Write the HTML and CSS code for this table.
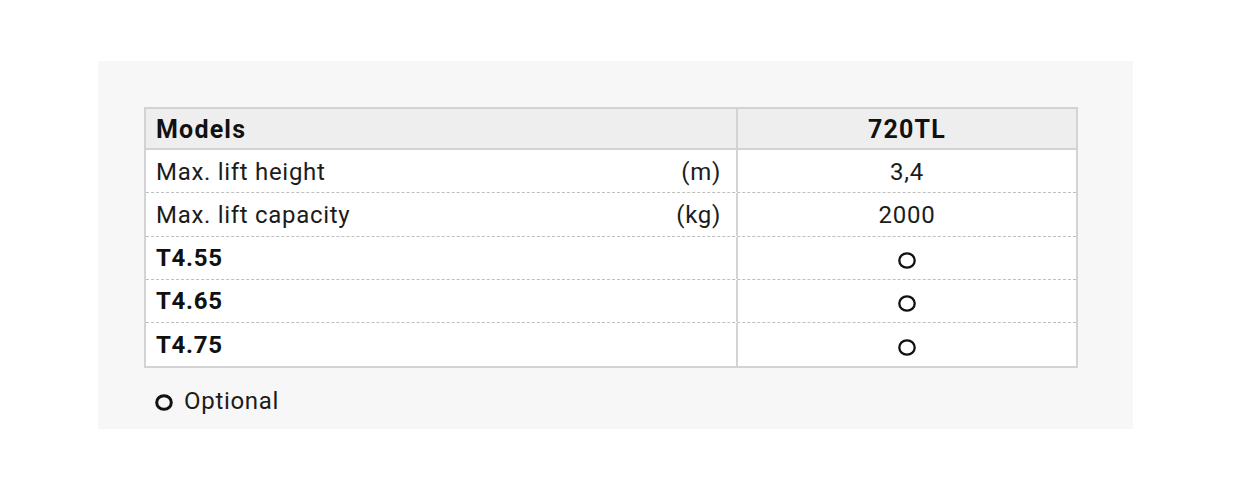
FILE: index.html
```html
<html>
<head>
<title>720TL Specifications</title>
<link rel="stylesheet" href="styles.css">
</head>
<body>
<div class="panel">
    <div class="specs">
        <div class="row head">
            <div class="label">Models</div>
            <div class="value">720TL</div>
        </div>
        <div class="row">
            <div class="label"><span>Max. lift height</span><span>(m)</span></div>
            <div class="value">3,4</div>
        </div>
        <div class="row">
            <div class="label"><span>Max. lift capacity</span><span>(kg)</span></div>
            <div class="value">2000</div>
        </div>
        <div class="row bold">
            <div class="label">T4.55</div>
            <div class="value"><svg class="opt" width="18" height="17" viewBox="0 0 18 17"><ellipse cx="9" cy="8.5" rx="7.7" ry="7.2" fill="none" stroke="#111" stroke-width="2.3"/></svg></div>
        </div>
        <div class="row bold">
            <div class="label">T4.65</div>
            <div class="value"><svg class="opt" width="18" height="17" viewBox="0 0 18 17"><ellipse cx="9" cy="8.5" rx="7.7" ry="7.2" fill="none" stroke="#111" stroke-width="2.3"/></svg></div>
        </div>
        <div class="row bold last">
            <div class="label">T4.75</div>
            <div class="value"><svg class="opt" width="18" height="17" viewBox="0 0 18 17"><ellipse cx="9" cy="8.5" rx="7.7" ry="7.2" fill="none" stroke="#111" stroke-width="2.3"/></svg></div>
        </div>
    </div>
    <div class="legend">
        <svg width="18" height="17" viewBox="0 0 18 17"><ellipse cx="9" cy="8.5" rx="7.3" ry="6.8" fill="none" stroke="#111" stroke-width="3"/></svg>
        <span>Optional</span>
    </div>
</div>
</body>
</html>
```

FILE: styles.css
```css
body {
    margin: 0;
    background: white;
    color: #1c1c1c;
    font-family: Roboto, "Liberation Sans", sans-serif;
}

.panel {
    box-sizing: border-box;
    width: 1035px;
    height: 368px;
    margin: 61px 0 0 98px;
    padding: 46px 55px 0 46px;
    background: #f7f7f7;
}

.specs {
    border: 2px solid #d3d3d3;
    background: white;
}

.row {
    display: grid;
    grid-template-columns: 592px 338px;
    height: 43.25px;
    box-sizing: border-box;
    border-bottom: 1px dashed #bfbfbf;
    font-size: 24px;
    letter-spacing: 0.7px;
}

.row.last {
    border-bottom: none;
    height: 43px;
}

.row.head {
    height: 41px;
    border-bottom: 2px solid #d3d3d3;
    background: #eeeeee;
    font-size: 25px;
    font-weight: bold;
    letter-spacing: 1.2px;
    color: #111;
}

.row.bold .label {
    font-weight: bold;
    color: #111;
}

.label {
    display: flex;
    align-items: center;
    justify-content: space-between;
    padding: 1px 15px 0 10px;
    border-right: 2px solid #d3d3d3;
}

.value {
    display: flex;
    align-items: center;
    justify-content: center;
    padding-top: 1px;
}

.opt {
    margin-top: 5px;
}

.legend {
    display: flex;
    align-items: center;
    gap: 11px;
    margin-top: 19px;
    padding-left: 11px;
    font-size: 24px;
    letter-spacing: 0.7px;
    line-height: 28px;
}

.legend svg {
    margin-top: 3px;
}
```
